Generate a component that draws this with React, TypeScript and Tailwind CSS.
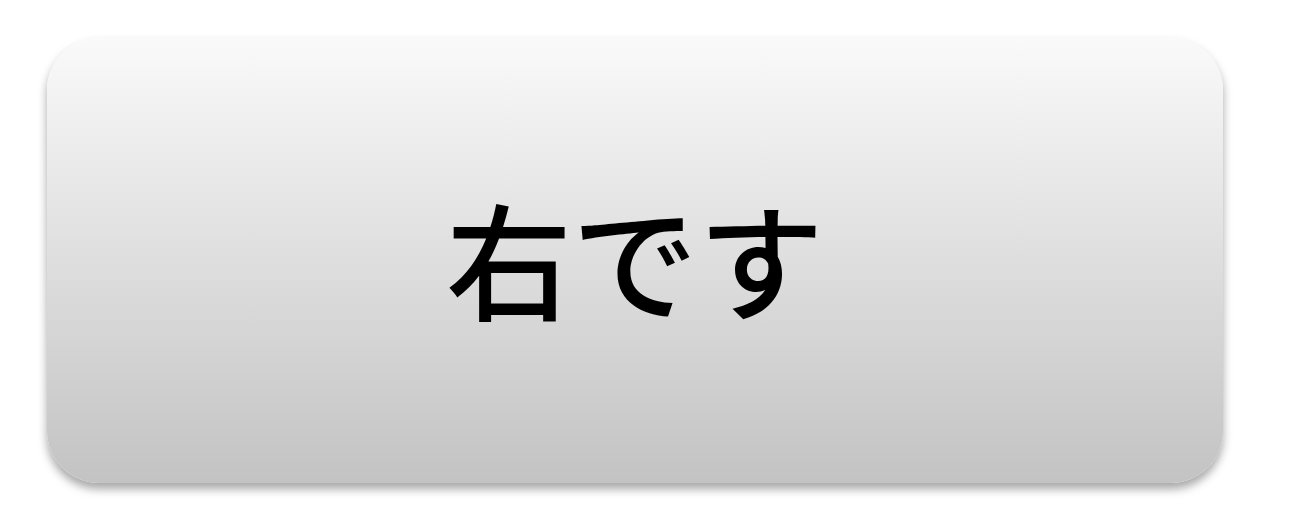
export default function App() {
  return (
    <div className="w-[1292px] h-[521px] bg-white pt-[38px] pl-[47px]">
      <div
        className="w-[1176px] h-[445px] rounded-[52px] bg-gradient-to-b from-[#fafafa] to-[#c3c3c3] shadow-[0_6px_10px_rgba(0,0,0,0.35)] flex items-center justify-center pb-[10px]"
      >
        <span
          className="text-[126px] leading-none text-black font-medium"
          style={{ fontFamily: '"Noto Sans CJK JP", sans-serif' }}
        >
          右です
        </span>
      </div>
    </div>
  );
}
